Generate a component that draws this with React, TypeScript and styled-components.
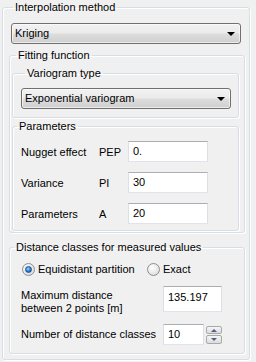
import React from "react";
import styled, { createGlobalStyle } from "styled-components";

const Global = createGlobalStyle`
  html, body { margin: 0; padding: 0; }
  body {
    width: 256px; height: 362px; overflow: hidden;
    background: #f0f0f0;
    font-family: "Liberation Sans", Arial, sans-serif;
    font-size: 11px; color: #000;
  }
`;

const Page = styled.div`
  padding: 1px 0 0 2px;
  width: 248px;
`;

const Group = styled.fieldset<{ $pl?: number; $pr?: number; $pb?: number }>`
  margin: 0;
  padding: 0 ${(p) => p.$pr ?? 0}px ${(p) => p.$pb ?? 0}px ${(p) => p.$pl ?? 0}px;
  min-width: 0;
  border: 1px solid #d5dfe5;
  border-radius: 3px;
  box-shadow: inset 1px 1px 0 #fff, 1px 1px 0 #fff;
  display: flex;
  flex-direction: column;
`;

const Legend = styled.legend`
  margin-left: 4px;
  padding: 0 2px;
  line-height: 13px;
  height: 13px;
`;

const Spacer = styled.div<{ $h: number }>`
  height: ${(p) => p.$h}px;
  flex: none;
`;

const Combo = styled.div<{ $ml: number; $mr: number }>`
  margin: 0 ${(p) => p.$mr}px 0 ${(p) => p.$ml}px;
  height: 21px;
  box-sizing: border-box;
  border: 1px solid #707070;
  border-radius: 3px;
  background: linear-gradient(#f2f2f2 0%, #ebebeb 48%, #dddddd 52%, #cfcfcf 100%);
  display: flex;
  align-items: center;
  padding: 0 5px 0 3px;
  box-shadow: inset 0 0 0 1px rgba(255,255,255,0.6);
`;

const ComboText = styled.span`
  flex: 1;
  line-height: 13px;
`;

const Arrow = styled.span`
  width: 0; height: 0;
  border-left: 4px solid transparent;
  border-right: 4px solid transparent;
  border-top: 4px solid #000;
  margin-top: 1px;
`;

const ParamRow = styled.div`
  display: flex;
  align-items: center;
  height: 21px;
  margin-bottom: 10px;
  &:last-child { margin-bottom: 0; }
`;

const ParamLabel = styled.span`
  width: 78px;
  padding-left: 8px;
`;

const ParamCode = styled.span`
  width: 29px;
`;

const Input = styled.div<{ $w: number; $h?: number; $top?: boolean }>`
  width: ${(p) => p.$w}px;
  height: ${(p) => p.$h ?? 21}px;
  box-sizing: border-box;
  background: #fff;
  border: 1px solid #e2e3ea;
  border-top-color: #abadb3;
  border-left-color: #dbdfe6;
  border-right-color: #dbdfe6;
  display: flex;
  align-items: ${(p) => (p.$top ? "flex-start" : "center")};
  padding: ${(p) => (p.$top ? "4px" : "0")} 4px 0;
  line-height: 13px;
`;

const RadioRow = styled.div`
  display: flex;
  align-items: center;
  margin-left: 12px;
  height: 13px;
`;

const RadioItem = styled.label<{ $w: number }>`
  display: flex;
  align-items: center;
  gap: 3px;
  width: ${(p) => p.$w}px;
  line-height: 13px;
`;

const RadioCircle = styled.span<{ $on?: boolean }>`
  width: 13px; height: 13px;
  box-sizing: border-box;
  border-radius: 50%;
  border: 1px solid #8e8f8f;
  background: radial-gradient(circle at 40% 35%, #ffffff 0%, #e8e8e8 55%, #cfcfcf 100%);
  display: flex;
  align-items: center;
  justify-content: center;
  &::after {
    content: "";
    display: ${(p) => (p.$on ? "block" : "none")};
    width: 5px; height: 5px;
    border-radius: 50%;
    background: radial-gradient(circle at 40% 35%, #9fd3ff 0%, #2a7cd3 55%, #11467f 100%);
    border: 1px solid #1b4f8a;
  }
`;

const DistRow = styled.div`
  display: flex;
  align-items: flex-start;
  padding-left: 11px;
`;

const DistLabel = styled.span<{ $w: number; $pt?: number }>`
  width: ${(p) => p.$w}px;
  line-height: 13px;
  padding-top: ${(p) => p.$pt ?? 0}px;
`;

const Spin = styled.div`
  display: flex;
  flex-direction: column;
  gap: 1px;
  margin-left: 2px;
  padding-top: 2px;
`;

const SpinBtn = styled.div<{ $h: number }>`
  width: 16px;
  height: ${(p) => p.$h}px;
  box-sizing: border-box;
  border: 1px solid #a9a9a9;
  border-radius: 2px;
  background: linear-gradient(#f6f6f6, #dcdcdc);
  display: flex;
  align-items: center;
  justify-content: center;
`;

const TriUp = styled.span`
  width: 0; height: 0;
  border-left: 3px solid transparent;
  border-right: 3px solid transparent;
  border-bottom: 3px solid #4a5f8a;
`;

const TriDown = styled.span`
  width: 0; height: 0;
  border-left: 3px solid transparent;
  border-right: 3px solid transparent;
  border-top: 3px solid #4a5f8a;
`;

export default function App() {
  return (
    <>
      <Global />
      <Page>
        <Group $pl={6} $pr={4} $pb={5}>
          <Legend>Interpolation method</Legend>
          <Spacer $h={9} />
          <Combo $ml={2} $mr={4}>
            <ComboText>Kriging</ComboText>
            <Arrow />
          </Combo>
          <Spacer $h={5} />
          <Group $pl={2} $pr={5} $pb={1}>
            <Legend>Fitting function</Legend>
            <Spacer $h={5} />
            <Group $pl={8} $pr={7} $pb={8}>
              <Legend>Variogram type</Legend>
              <Spacer $h={8} />
              <Combo $ml={0} $mr={0}>
                <ComboText>Exponential variogram</ComboText>
                <Arrow />
              </Combo>
            </Group>
            <Spacer $h={2} />
            <Group $pb={6}>
              <Legend>Parameters</Legend>
              <Spacer $h={8} />
              <ParamRow>
                <ParamLabel>Nugget effect</ParamLabel>
                <ParamCode>PEP</ParamCode>
                <Input $w={80}>0.</Input>
              </ParamRow>
              <ParamRow>
                <ParamLabel>Variance</ParamLabel>
                <ParamCode>PI</ParamCode>
                <Input $w={80}>30</Input>
              </ParamRow>
              <ParamRow>
                <ParamLabel>Parameters</ParamLabel>
                <ParamCode>A</ParamCode>
                <Input $w={80}>20</Input>
              </ParamRow>
            </Group>
          </Group>
          <Spacer $h={8} />
          <Group $pb={8} $pr={1}>
            <Legend>Distance classes for measured values</Legend>
            <Spacer $h={9} />
            <RadioRow>
              <RadioItem $w={125}>
                <RadioCircle $on />
                Equidistant partition
              </RadioItem>
              <RadioItem $w={60}>
                <RadioCircle />
                Exact
              </RadioItem>
            </RadioRow>
            <Spacer $h={10} />
            <DistRow>
              <DistLabel $w={142} $pt={3}>
                Maximum distance
                <br />
                between 2 points [m]
              </DistLabel>
              <Input $w={59} $h={26} $top>
                135.197
              </Input>
            </DistRow>
            <Spacer $h={9} />
            <DistRow>
              <DistLabel $w={142} $pt={4}>
                Number of distance classes
              </DistLabel>
              <Input $w={41}>10</Input>
              <Spin>
                <SpinBtn $h={8}>
                  <TriUp />
                </SpinBtn>
                <SpinBtn $h={9}>
                  <TriDown />
                </SpinBtn>
              </Spin>
            </DistRow>
          </Group>
        </Group>
      </Page>
    </>
  );
}
